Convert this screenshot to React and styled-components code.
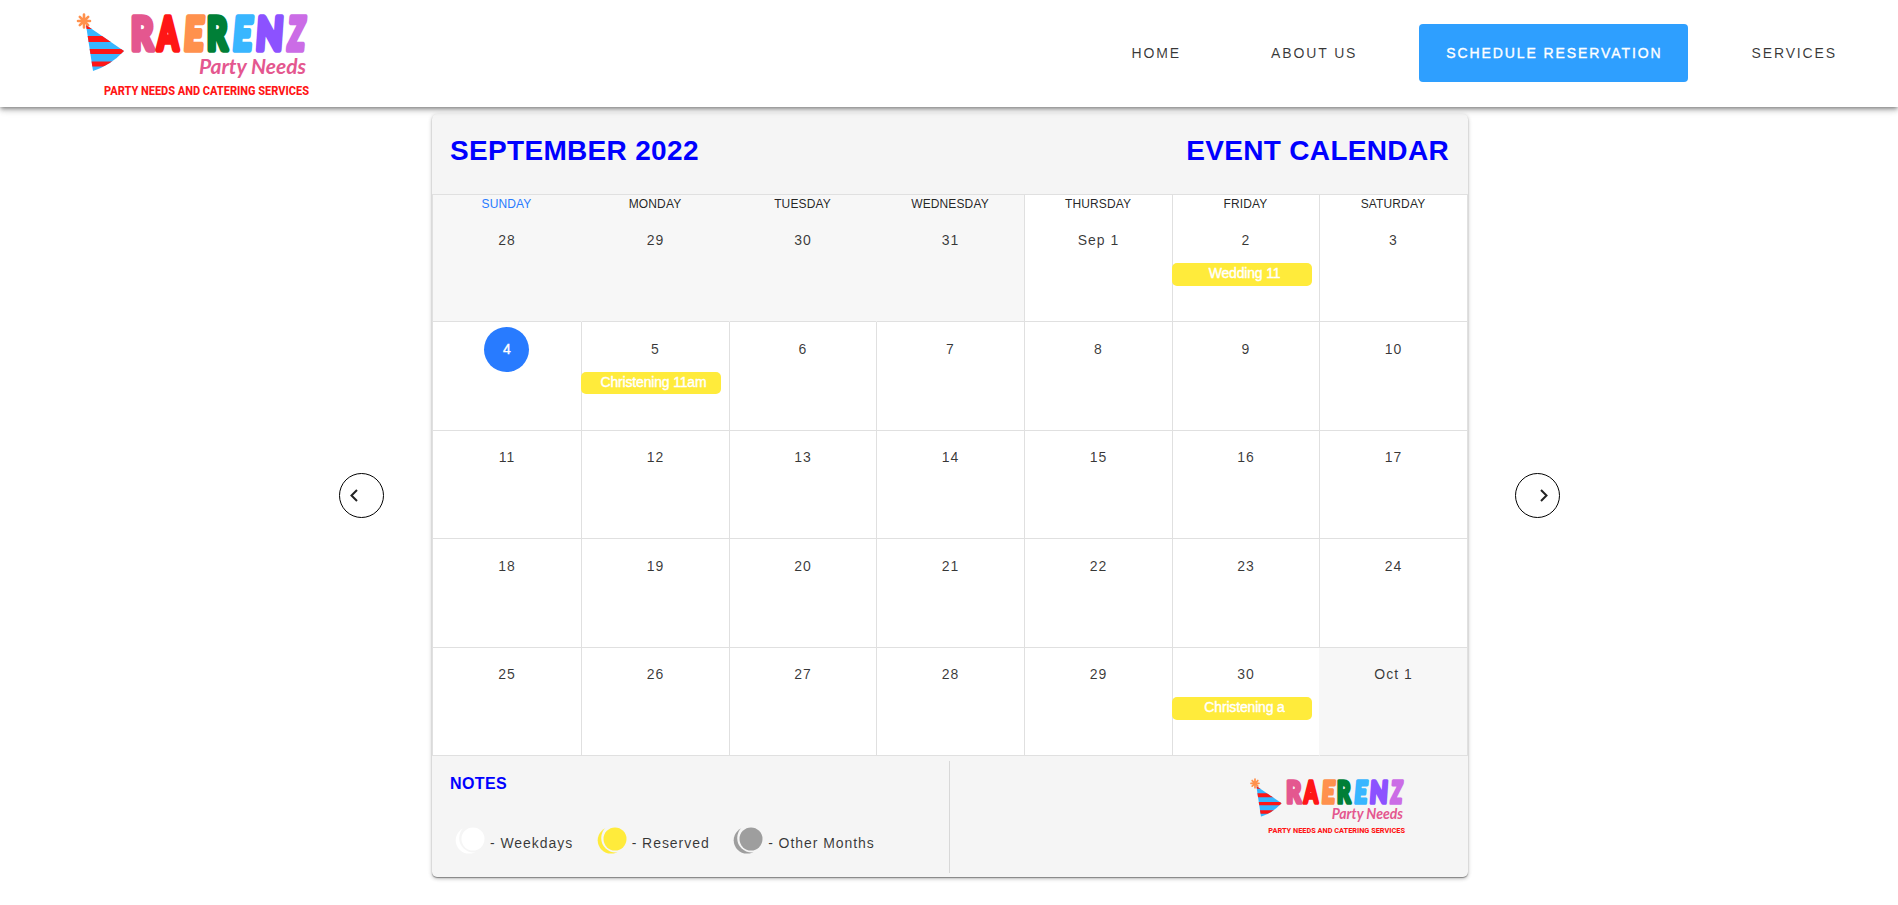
import React, { useId } from "react";
import styled, { createGlobalStyle } from "styled-components";

const GlobalStyle = createGlobalStyle`
  * { box-sizing: border-box; }
  body {
    margin: 0;
    min-height: 100vh;
    background: #fff;
    color: rgba(0, 0, 0, 0.87);
    font-family: "Liberation Sans", Arial, sans-serif;
  }
`;

const Header = styled.header`
  position: relative;
  z-index: 2;
  display: flex;
  align-items: flex-start;
  justify-content: space-between;
  height: 107px;
  padding: 10px 35px 0 75px;
  background: #fff;
  box-shadow: 0 2px 4px -1px rgba(0, 0, 0, 0.4), 0 4px 5px rgba(0, 0, 0, 0.14),
    0 1px 10px rgba(0, 0, 0, 0.12);
`;

const Nav = styled.nav`
  display: flex;
  gap: 36px;
  margin-top: 14px;
`;

const NavLink = styled.a`
  display: flex;
  align-items: center;
  height: 58px;
  padding: 0 26px 0 27px;
  border-radius: 4px;
  font-size: 14px;
  letter-spacing: ${(p) => (p.$active ? "1.9px" : "1.87px")};
  white-space: nowrap;
  color: ${(p) => (p.$active ? "#fff" : "rgba(0, 0, 0, 0.78)")};
  background: ${(p) => (p.$active ? "#2e9fff" : "transparent")};
  -webkit-text-stroke: ${(p) => (p.$active ? "0.35px #fff" : "0")};

  &:first-child {
    margin-right: 1px;
  }
`;

const Main = styled.main`
  display: flex;
  align-items: center;
  padding: 7px 0 20px 339px;
`;

const ArrowButton = styled.button`
  display: flex;
  align-items: center;
  justify-content: ${(p) => (p.$next ? "flex-end" : "flex-start")};
  width: 45px;
  height: 45px;
  padding: ${(p) => (p.$next ? "0 11px" : "0 11px 0 10px")};
  border: 1px solid #000;
  border-radius: 50%;
  background: #fff;
`;

const Card = styled.section`
  width: 1036px;
  height: 763px;
  margin: 0 47px 0 48px;
  border-radius: 5px;
  background: #f5f5f5;
  box-shadow: 0 1px 1px rgba(0, 0, 0, 0.35), 0 2px 4px -1px rgba(0, 0, 0, 0.25),
    0 1px 5px rgba(0, 0, 0, 0.12);
`;

const CardHeader = styled.div`
  display: flex;
  justify-content: space-between;
  height: 80px;
  padding: 21px 19px 0 18px;
  color: #00f;
`;

const Title = styled.h1`
  margin: 0;
  font-size: 28px;
  line-height: 32px;
  letter-spacing: 0.32px;
`;

const Grid = styled.div`
  display: grid;
  grid-template-columns: 149px 148px 147px 148px 148px 147px 148px;
  grid-template-rows: 127px 109px 108px 109px 108px;
  border-top: 1px solid #e0e0e0;
  border-left: 1px solid #e0e0e0;
`;

const Cell = styled.div`
  display: flex;
  flex-direction: column;
  align-items: center;
  padding-top: ${(p) => (p.$tight ? "4px" : "5px")};
  background: ${(p) => (p.$muted ? "#f7f7f7" : "#fff")};
  border-bottom: 1px solid #e0e0e0;
  border-right: 1px solid ${(p) => (p.$noLine ? "#f7f7f7" : "#e0e0e0")};
`;

const Weekday = styled.div`
  height: 18px;
  margin: -3px 1px 3px 0;
  font-size: 12px;
  line-height: 14px;
  letter-spacing: 0.12px;
  color: ${(p) => (p.$today ? "#287bff" : "rgba(0, 0, 0, 0.87)")};
`;

const DayNumber = styled.div`
  display: flex;
  align-items: center;
  justify-content: center;
  min-width: 45px;
  height: 45px;
  padding-bottom: 2px;
  border-radius: 50%;
  font-size: 14px;
  letter-spacing: 1px;
  color: ${(p) => (p.$today ? "#fff" : "rgba(0, 0, 0, 0.78)")};
  background: ${(p) => (p.$today ? "#287bff" : "transparent")};
  margin-right: ${(p) => (p.$today ? "2px" : "0")};
  padding-left: ${(p) => (p.$today ? "3px" : "0")};
  -webkit-text-stroke: ${(p) => (p.$today ? "0.4px #fff" : "0")};
`;

const EventChip = styled.div`
  align-self: flex-start;
  width: 140px;
  height: ${(p) => (p.$short ? "22px" : "23px")};
  margin-left: -1px;
  border-radius: 5px;
  background: #ffeb3b;
  color: #fff;
  font-size: 14px;
  line-height: 21px;
  letter-spacing: -0.17px;
  text-align: center;
  padding-left: 5px;
  -webkit-text-stroke: 0.4px #fff;
`;

const Footer = styled.footer`
  display: flex;
  height: 121px;
  padding-top: 5px;
`;

const Notes = styled.div`
  width: 518px;
  height: 112px;
  padding: 14px 18px 0;
  border-right: 1px solid #d8d8d8;
`;

const NotesTitle = styled.h2`
  margin: 0;
  font-size: 16px;
  line-height: 18px;
  letter-spacing: 0.4px;
  color: #00f;
`;

const Legend = styled.div`
  display: flex;
  gap: 23.5px;
  margin-top: 34px;
  padding-left: 5px;
`;

const LegendItem = styled.div`
  display: flex;
  align-items: flex-start;
  gap: 5px;
  font-size: 14px;
  letter-spacing: 0.95px;
  white-space: nowrap;
  color: rgba(0, 0, 0, 0.78);

  span {
    padding-top: 8px;
    line-height: 16px;
  }
`;

const FooterLogo = styled.div`
  flex: 1;
  display: flex;
  justify-content: flex-end;
  padding: 15px 59px 0 0;
`;

const LogoSvg = styled.svg`
  display: block;
  overflow: visible;
`;

const LETTERS = [
  { ch: "R", x: 56, sx: 0.76, skew: 0, fill: "#e4578f" },
  { ch: "A", x: 82.5, sx: 0.65, skew: 0, fill: "#ff1616" },
  { ch: "E", x: 108.2, sx: 0.74, skew: -4, fill: "#ff914d" },
  { ch: "R", x: 132, sx: 0.69, skew: 0, fill: "#007f37" },
  { ch: "E", x: 157, sx: 0.72, skew: -5, fill: "#38b6ff" },
  { ch: "N", x: 180.2, sx: 0.76, skew: -4, fill: "#8c52ff" },
  { ch: "Z", x: 212, sx: 0.6, skew: -5, fill: "#cb6ce6" },
];

function Logo({ width, height }) {
  const id = useId();
  return (
    <LogoSvg width={width} height={height} viewBox="0 0 240 90">
      <clipPath id={id}>
        <path d="M11 15 L49 41 Q36 55 18 61 Z" />
      </clipPath>
      <g clipPath={`url(#${id})`}>
        <rect width="52" height="64" fill="#38b6ff" />
        <path
          d="M0 15h52v4H0z M0 26h52v6H0z M0 39h52v5H0z M0 51.500h52v5H0z"
          fill="#ff1616"
        />
      </g>
      <path
        d="M9 4.500v13 M3 11h12 M4.800 6.800l8.400 8.400 M13.200 6.800l-8.400 8.400"
        stroke="#ff914d"
        strokeWidth="2.600"
        strokeLinecap="round"
      />
      {LETTERS.map((l) => (
        <text
          key={l.x}
          transform={`translate(${l.x} 40) skewX(${l.skew}) scale(${l.sx} 1)`}
          fontFamily="Lato, sans-serif"
          fontWeight="900"
          fontSize="45.5"
          fill={l.fill}
          stroke={l.fill}
          strokeWidth="5.6"
          strokeLinejoin="round"
        >
          {l.ch}
        </text>
      ))}
      <text
        x="124"
        y="64"
        fontFamily="Lato, sans-serif"
        fontStyle="italic"
        fontWeight="700"
        fontSize="21.5"
        textLength="107"
        lengthAdjust="spacingAndGlyphs"
        fill="#e4578f"
      >
        Party Needs
      </text>
      <text
        x="29"
        y="85"
        fontFamily="Roboto, sans-serif"
        fontWeight="800"
        fontSize="12"
        textLength="205"
        lengthAdjust="spacingAndGlyphs"
        fill="#ff1616"
      >
        PARTY NEEDS AND CATERING SERVICES
      </text>
    </LogoSvg>
  );
}

function Chevron({ next }) {
  return (
    <svg width="8" height="13" viewBox="0 0 8 13" fill="none">
      <path
        d={next ? "M1 1l5.500 5.500L1 12" : "M7 1L1.500 6.500 7 12"}
        stroke="#222"
        strokeWidth="2"
      />
    </svg>
  );
}

function Moon({ color }) {
  return (
    <svg width="30" height="28" viewBox="0 0 30 28">
      <circle cx="14" cy="13.300" r="13.300" fill={color} />
      <circle cx="18.800" cy="11" r="14.600" fill="#f5f5f5" />
      <circle cx="18" cy="12" r="11.500" fill={color} />
    </svg>
  );
}

const WEEKDAYS = ["SUNDAY", "MONDAY", "TUESDAY", "WEDNESDAY", "THURSDAY", "FRIDAY", "SATURDAY"];

const DAYS = [
  "28", "29", "30", "31", "Sep 1", "2", "3",
  ...Array.from({ length: 27 }, (_, i) => String(i + 4)),
  "Oct 1",
];

const EVENTS = { 5: "Wedding 11", 8: "Christening 11am", 33: "Christening a" };

const LEGEND = [
  { label: "- Weekdays", color: "#fff" },
  { label: "- Reserved", color: "#ffeb3b" },
  { label: "- Other Months", color: "#9e9e9e" },
];

const NAV = ["HOME", "ABOUT US", "SCHEDULE RESERVATION", "SERVICES"];

export default function App() {
  return (
    <>
      <GlobalStyle />
      <Header>
        <Logo width={240} height={90} />
        <Nav>
          {NAV.map((label, i) => (
            <NavLink key={label} $active={i === 2}>
              {label}
            </NavLink>
          ))}
        </Nav>
      </Header>
      <Main>
        <ArrowButton aria-label="Previous month">
          <Chevron />
        </ArrowButton>
        <Card>
          <CardHeader>
            <Title>SEPTEMBER 2022</Title>
            <Title as="h2">EVENT CALENDAR</Title>
          </CardHeader>
          <Grid>
            {DAYS.map((day, i) => {
              const row = Math.floor(i / 7);
              return (
                <Cell
                  key={i}
                  $muted={i < 4 || i === 34}
                  $noLine={i < 3 || i === 33}
                  $tight={row === 2 || row === 4}
                >
                  {row === 0 && <Weekday $today={i === 0}>{WEEKDAYS[i]}</Weekday>}
                  <DayNumber $today={i === 7}>{day}</DayNumber>
                  {EVENTS[i] && <EventChip $short={row === 1}>{EVENTS[i]}</EventChip>}
                </Cell>
              );
            })}
          </Grid>
          <Footer>
            <Notes>
              <NotesTitle>NOTES</NotesTitle>
              <Legend>
                {LEGEND.map((item) => (
                  <LegendItem key={item.label}>
                    <Moon color={item.color} />
                    <span>{item.label}</span>
                  </LegendItem>
                ))}
              </Legend>
            </Notes>
            <FooterLogo>
              <Logo width={160} height={60} />
            </FooterLogo>
          </Footer>
        </Card>
        <ArrowButton $next aria-label="Next month">
          <Chevron next />
        </ArrowButton>
      </Main>
    </>
  );
}
